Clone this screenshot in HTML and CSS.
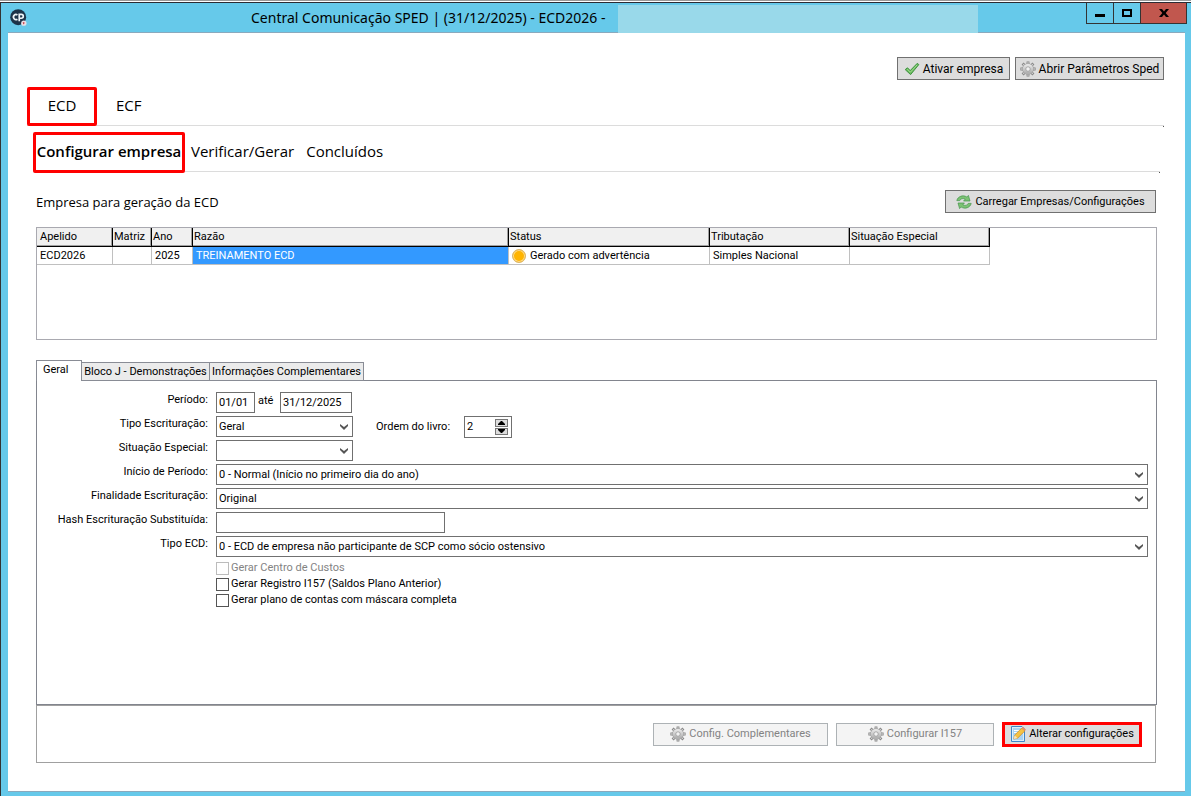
FILE: index.html
```
<!DOCTYPE html>
<html lang="pt-BR">
<head>
	<meta charset="UTF-8">
	<title>Central Comunicação SPED</title>
	<link rel="stylesheet" href="styles.css">
</head>
<body>
	<svg class="defs" aria-hidden="true">
		<defs>
			<linearGradient id="steel" x1="0" y1="0" x2="0" y2="1">
				<stop offset="0" stop-color="#e4e4e4"/><stop offset="1" stop-color="#b0b0b0"/>
			</linearGradient>
			<symbol id="gear" viewBox="0 0 16 16">
				<path d="M8 .4V15.6M.4 8H15.6M2.6 2.6L13.4 13.4M13.4 2.6L2.6 13.4" stroke="#858585" stroke-width="2.8"/>
				<path d="M8 1.2V14.8M1.2 8H14.8M3.2 3.2L12.8 12.8M12.8 3.2L3.2 12.8" stroke="#d4d4d4" stroke-width="1.3"/>
				<circle cx="8" cy="8" r="3.8" fill="none" stroke="#999" stroke-width="4"/>
				<circle cx="8" cy="8" r="3.8" fill="none" stroke="url(#steel)" stroke-width="3"/>
				<circle cx="8" cy="8" r="2.2" fill="#f2f2f2" stroke="#999" stroke-width=".7"/>
			</symbol>
		</defs>
	</svg>
	<div class="window">
		<header class="titlebar">
			<svg class="logo" viewBox="0 0 16 16">
				<circle cx="7.7" cy="7.7" r="7.5" fill="#1d3349"/>
				<path d="M7 5.6A2.4 2.4 0 1 0 7 9.6M8.7 11.5V5.1H10.7A1.8 1.8 0 0 1 10.7 8.7H8.7" fill="none" stroke="#eef4f8" stroke-width="1.6"/>
				<circle cx="13" cy="13.3" r="2.5" fill="#e9dfe4"/>
				<path d="M12 12.2L14 13L12.6 14.6Z" fill="#c8323c"/>
			</svg>
			<h1>Central Comunicação SPED | (31/12/2025) - ECD2026 -</h1>
			<span class="mask"></span>
			<div class="winbtns">
				<button type="button" aria-label="Minimizar"><svg viewBox="0 0 10 10"><path d="M0 6H10V9H0Z"/></svg></button>
				<button type="button" aria-label="Maximizar"><svg viewBox="0 0 10 10"><path d="M0 1H10V9H0ZM2 3V7H8V3Z" fill-rule="evenodd"/></svg></button>
				<button type="button" class="close" aria-label="Fechar"><svg viewBox="0 0 10 10"><path d="M0 1H3L5 3.4L7 1H10L6.7 5L10 9H7L5 6.6L3 9H0L3.3 5Z"/></svg></button>
			</div>
		</header>

		<main>
			<div class="toolbar">
				<button type="button" class="btn ativar">
					<svg class="ico" viewBox="0 0 16 16"><path d="M1.2 8.6L3.5 6.8L6.2 9.6L13.3 2.3L14.8 3.6L6.6 13.6Z" fill="#68b85c" stroke="#3d9440"/><path d="M3.4 8.2L6.4 11.2L13 4" fill="none" stroke="#a2dc91"/></svg>
					Ativar empresa
				</button>
				<button type="button" class="btn parametros"><svg class="ico"><use href="#gear"/></svg>Abrir Parâmetros Sped</button>
			</div>

			<nav class="tabs">
				<a href="#" class="marked">ECD</a>
				<a href="#">ECF</a>
			</nav>
			<nav class="tabs subtabs">
				<a href="#" class="marked">Configurar empresa</a>
				<a href="#">Verificar/Gerar</a>
				<a href="#">Concluídos</a>
			</nav>

			<section class="content">
				<div class="head">
					<h2>Empresa para geração da ECD</h2>
					<button type="button" class="btn carregar">
						<svg class="ico" viewBox="0 0 16 16"><path d="M.8 6.6C1.6 2.6 7 .4 10.8 3L12.4 1.4L14 7H7.6L9.2 5.2C7 4 4.4 4.6 3.8 6.6Z" fill="#7cc274" stroke="#43944a" stroke-width=".7"/><path d="M15.2 9.4C14.4 13.4 9 15.6 5.2 13L3.6 14.6L2 9H8.4L6.8 10.8C9 12 11.6 11.4 12.2 9.4Z" fill="#7cc274" stroke="#43944a" stroke-width=".7"/></svg>
						Carregar Empresas/Configurações
					</button>
				</div>

				<div class="grid">
					<table>
						<colgroup>
							<col class="c-apelido"><col class="c-matriz"><col class="c-ano"><col class="c-razao"><col class="c-status"><col class="c-trib"><col class="c-sit">
						</colgroup>
						<thead>
							<tr><th>Apelido</th><th>Matriz</th><th>Ano</th><th>Razão</th><th>Status</th><th>Tributação</th><th>Situação Especial</th></tr>
						</thead>
						<tbody>
							<tr><td>ECD2026</td><td></td><td>2025</td><td class="selected">TREINAMENTO ECD</td><td><span class="status">Gerado com advertência</span></td><td>Simples Nacional</td><td></td></tr>
						</tbody>
					</table>
				</div>

				<div class="pages" role="tablist">
					<button type="button" role="tab" class="active" aria-selected="true">Geral</button>
					<button type="button" role="tab">Bloco J - Demonstrações</button>
					<button type="button" role="tab">Informações Complementares</button>
				</div>
				<form class="panel">
					<div class="row">
						<label for="inicio">Período:</label>
						<input type="text" id="inicio" class="dia" value="01/01">
						<label for="fim" class="ate">até</label>
						<input type="text" id="fim" class="data" value="31/12/2025">
					</div>
					<div class="row">
						<label for="tipoEscr">Tipo Escrituração:</label>
						<select id="tipoEscr" class="short"><option>Geral</option></select>
						<label for="ordem" class="ordem">Ordem do livro:</label>
						<span class="spin">
							<input type="number" id="ordem" value="2">
							<span class="arrows">
								<button type="button" aria-label="Aumentar"><svg viewBox="0 0 7 4"><path d="M3 0H4L7 3V4H0V3Z"/></svg></button>
								<button type="button" aria-label="Diminuir"><svg viewBox="0 0 7 4"><path d="M0 0H7V1L4 4H3L0 1Z"/></svg></button>
							</span>
						</span>
					</div>
					<div class="row">
						<label for="sitEsp">Situação Especial:</label>
						<select id="sitEsp" class="short"><option></option></select>
					</div>
					<div class="row">
						<label for="iniPer">Início de Período:</label>
						<select id="iniPer"><option>0 - Normal (Início no primeiro dia do ano)</option></select>
					</div>
					<div class="row">
						<label for="finalidade">Finalidade Escrituração:</label>
						<select id="finalidade"><option>Original</option></select>
					</div>
					<div class="row">
						<label for="hash">Hash Escrituração Substituída:</label>
						<input type="text" id="hash" class="hash">
					</div>
					<div class="row">
						<label for="tipoEcd">Tipo ECD:</label>
						<select id="tipoEcd"><option>0 - ECD de empresa não participante de SCP como sócio ostensivo</option></select>
					</div>
					<div class="checks">
						<label class="off"><input type="checkbox" disabled>Gerar Centro de Custos</label>
						<label><input type="checkbox">Gerar Registro I157 (Saldos Plano Anterior)</label>
						<label><input type="checkbox">Gerar plano de contas com máscara completa</label>
					</div>
				</form>
				<footer class="actions">
					<button type="button" class="btn complementares" disabled><svg class="ico"><use href="#gear"/></svg>Config. Complementares</button>
					<button type="button" class="btn i157" disabled><svg class="ico"><use href="#gear"/></svg>Configurar I157</button>
					<button type="button" class="btn alterar">
						<svg class="ico" viewBox="0 0 16 16"><path d="M1.5 .5H12L14.5 3V15.5H1.5Z" fill="#dceefa" stroke="#3f86c8"/><path d="M3 2H11L13 4V14H3Z" fill="#a9d3f2"/><path d="M4 4.5H10M4 6.5H8" stroke="#fff"/><path d="M4.6 9.2L11.8 2L14.8 5L7.6 12.2L3.8 13Z" fill="#f5c242" stroke="#c98622" stroke-width=".7"/><path d="M11.8 2L13 .8L16 3.8L14.8 5Z" fill="#e88c6c"/><path d="M4.6 9.2L7.6 12.2L3.8 13Z" fill="#f7e3c0"/></svg>
						Alterar configurações
					</button>
				</footer>
			</section>
		</main>
	</div>
</body>
</html>
```
FILE: styles.css
```
*, *:before, *:after {box-sizing: border-box;}
body {margin: 0;font: 11px/16px Roboto, "Noto Sans", sans-serif;color: #000;}
button, input, select {font: inherit;color: inherit;margin: 0;border-radius: 0;}
.defs {position: absolute;width: 0;height: 0;}

/* window frame */
.window {min-height: 100vh;display: flex;flex-direction: column;background: #66c9ea;border-left: 1px solid #333;padding: 0 6px 4px 7px;}
.window:before {content: '';height: 3px;margin: 0 -6px 0 -8px;border-top: 1px solid #999;border-bottom: 1px solid #2b2b33;background: #fff;}
.titlebar {display: flex;height: 30px;}
.logo {width: 17px;height: 17px;margin: 6px 0 0 2px;}
.titlebar h1 {width: 363px;margin: 0 4px 0 224px;font: 14px/30px "Noto Sans", sans-serif;white-space: nowrap;}
.mask {width: 360px;margin-top: 2px;background: #99d9ea;z-index: 1;}
.winbtns {display: flex;height: 21px;margin: 0 -2px 0 auto;border: 1px solid #333;border-top: 0;}
.winbtns button {width: 27px;padding: 0;border: 0;border-right: 1px solid #333;background: none;}
.winbtns button.close {width: 45px;border-right: 0;background: #c1574e;}
.winbtns svg {width: 10px;height: 10px;display: block;margin: 0 auto;}
main {flex: 1;display: flex;flex-direction: column;background: #fff;border-top: 1px solid #8aa9bd;border-bottom: 1px solid #8aa9bd;margin-top: -1px;padding: 24px 21px 28px 19px;}

/* buttons */
.btn {display: flex;align-items: center;justify-content: center;gap: 3px;height: 23px;padding: 0;border: 1px solid #707070;background: #ddd;white-space: nowrap;}
.btn:disabled {border-color: #adb2b5;background: #f4f4f4;color: #838383;}
.ico {width: 16px;height: 16px;}
.toolbar {display: flex;justify-content: flex-end;gap: 5px;font-size: 12px;}
.ativar {width: 113px;}
.parametros {width: 149px;}
.carregar {width: 211px;}
.complementares {width: 175px;}
.i157 {width: 158px;}
.alterar {width: 140px;border: 3px solid #f00;height: 25px;}

/* tabs */
.tabs {display: flex;height: 39px;margin-top: 7px;border-bottom: 1px solid #dcdcdc;position: relative;font: 15px/30px "Open Sans", sans-serif;}
.tabs:after {content: '';width: 1px;height: 1px;background: #555;position: absolute;right: 0;bottom: -2px;}
.tabs a {color: #000;text-decoration: none;padding: 3px 0 0;text-align: center;white-space: nowrap;}
.tabs a.marked {border: 3px solid #f00;border-radius: 2px;width: 70px;height: 39px;padding: 0;margin-right: 19px;}
.subtabs {height: 40px;margin: 6px 4px 0 6px;line-height: 32px;}
.subtabs a {margin-right: 12px;}
.subtabs a.marked {width: 152px;height: 41px;margin-right: 6px;font-weight: 600;}

/* companies */
.content {flex: 1;display: flex;flex-direction: column;padding: 18px 7px 0 9px;}
.head {display: flex;justify-content: space-between;align-items: center;margin-right: 1px;}
.head h2 {margin: 0;font: 13px/16px "Open Sans", sans-serif;}
.grid {height: 113px;margin-top: 14px;border: 1px solid #a9a9b0;}
table {width: 953px;table-layout: fixed;border-collapse: separate;border-spacing: 0;}
th, td {padding: 0 3px;text-align: left;font-weight: normal;white-space: nowrap;overflow: hidden;}
th {height: 19px;padding: 0 1px;background: #f0f0f0;border-right: 1px solid #000;border-bottom: 1px solid #000;box-shadow: inset -1px -1px #a0a0a0;}
th:first-child, td:first-child {padding-left: 3px;}
td {height: 18px;border-right: 1px solid #c0c0c0;border-bottom: 1px solid #c0c0c0;}
td.selected {background: #39f;color: #fff;}
.c-apelido {width: 76px;}
.c-matriz {width: 39px;}
.c-ano {width: 41px;}
.c-razao {width: 316px;}
.c-status {width: 201px;}
.c-trib, .c-sit {width: 140px;}
.status {display: flex;align-items: center;gap: 4px;}
.status:before {content: '';width: 14px;height: 14px;border-radius: 50%;background: #ffb400;border: 1px solid #d9b56a;box-shadow: inset 0 0 0 1px #ffdc8c;}

/* settings */
.pages {display: flex;align-items: flex-end;margin: 20px 0 -1px;position: relative;}
.pages button {height: 19px;width: 128px;padding: 0;border: 1px solid #898c95;border-left-width: 0;background: #ebebeb;white-space: nowrap;}
.pages button:last-child {width: 154px;}
.pages button.active {width: 46px;height: 21px;padding: 0 6px 2px;border-left-width: 1px;border-bottom: 0;background: #fff;text-align: left;}
.panel {flex: 1;border: 1px solid #82858e;padding: 11px 8px;}
.row {display: flex;align-items: flex-start;margin-bottom: 3px;}
.row > label:first-child {width: 163px;margin-right: 8px;text-align: right;white-space: nowrap;}
.row input, .row select {height: 21px;border: 1px solid #707070;background: #fff;padding: 0 2px;}
.row select {flex: 1;min-width: 0;appearance: none;background: #fff url("data:image/svg+xml,%3Csvg xmlns='http://www.w3.org/2000/svg' width='8' height='6'%3E%3Cpath d='M0 0L4 3L8 0V2L4 6L0 2Z' fill='%23555'/%3E%3C/svg%3E") no-repeat right 4px center;}
.row select.short {flex: none;width: 137px;}
.row .dia {width: 39px;}
.row .data {width: 72px;}
.row .hash {width: 229px;}
.ate {width: 25px;padding: 1px 0 0 3px;}
.ordem {width: 88px;margin-left: 23px;padding-top: 3px;}
.spin {display: flex;width: 48px;height: 22px;border: 1px solid #707070;padding: 2px 3px 2px 0;margin-bottom: -1px;}
.row .spin input {flex: 1;min-width: 0;height: 16px;border: 0;appearance: textfield;}
.spin input::-webkit-inner-spin-button {appearance: none;}
.arrows {display: flex;flex-direction: column;gap: 1px;}
.arrows button {width: 13px;height: 8px;padding: 0;border: 1px solid #777;background: #ddd;}
.arrows svg {width: 7px;height: 4px;display: block;margin: 0 auto;}
.checks {padding-left: 171px;}
.checks label {display: flex;align-items: center;gap: 2px;width: max-content;height: 16px;}
.checks input {appearance: none;width: 13px;height: 13px;border: 1px solid #555;background: #fff;}
.off {color: #838383;}
.checks .off input {border-color: #bcbcbc;}
.actions {display: flex;justify-content: flex-end;align-items: center;gap: 8px;height: 58px;margin-right: 1px;padding-right: 13px;border: 1px solid #a0a0a0;}
```
